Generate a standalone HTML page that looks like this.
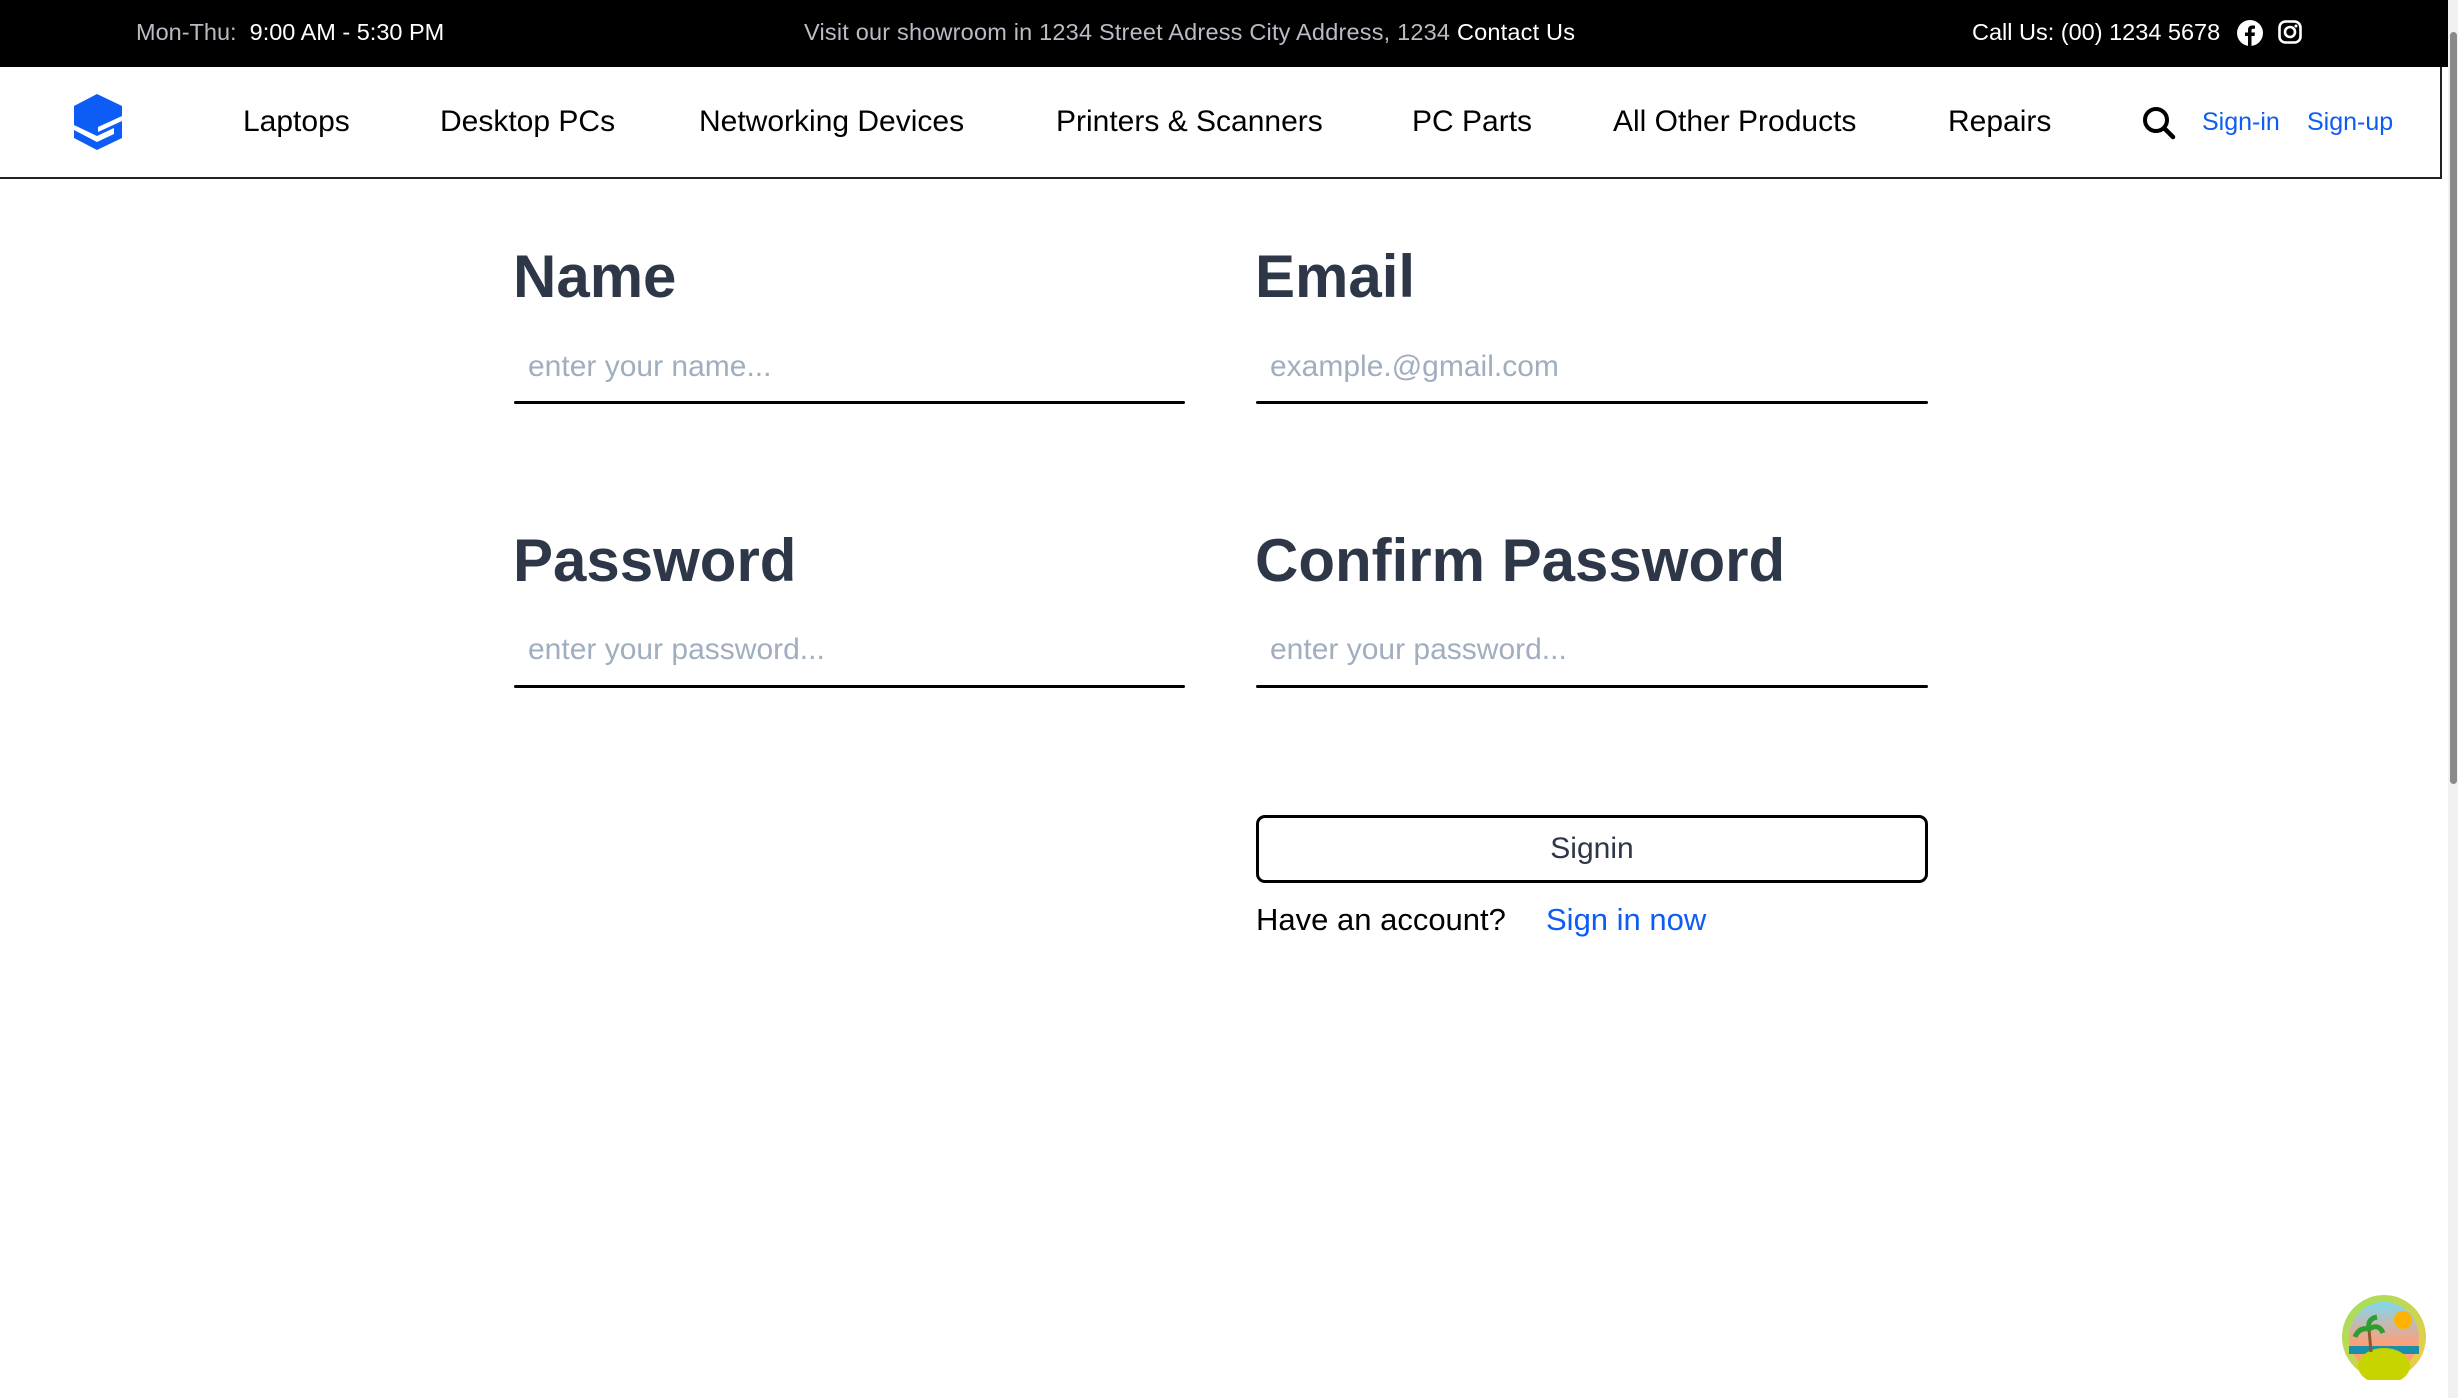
<!DOCTYPE html>
<html><head><meta charset="utf-8"><style>
*{margin:0;padding:0;box-sizing:border-box}
body{width:2458px;height:1398px;background:#fff;font-family:"Liberation Sans",sans-serif;position:relative;overflow:hidden}
.a{position:absolute;white-space:nowrap}
.top{position:absolute;left:0;top:0;width:2458px;height:67px;background:#000}
.tt{font-size:23.5px;line-height:24px;top:20px}
.nav{font-size:30px;color:#000;top:105px;line-height:34px}
.lbl{font-size:60px;font-weight:bold;color:#2d3748;line-height:62px}
.ph{font-size:30px;color:#a0aec0;line-height:32px}
.ul{position:absolute;height:3px;background:#000;border-radius:2px}
</style></head><body>
<div class="top"></div>
<div class="a tt" style="left:136px;color:#b8bcc4">Mon-Thu:&nbsp; <span style="color:#fff">9:00 AM - 5:30 PM</span></div>
<div class="a tt" style="left:804px;color:#b8bcc4;letter-spacing:0.2px">Visit our showroom in 1234 Street Adress City Address, 1234 <span style="color:#fff">Contact Us</span></div>
<div class="a tt" style="left:1972px;color:#fff">Call Us: (00) 1234 5678</div>
<svg class="a" style="left:2237px;top:20px" width="26" height="26" viewBox="0 0 26 26"><circle cx="13" cy="13" r="13" fill="#fff"/><path d="M14.5 26V16h3l.5-3.5h-3.5v-2c0-1 .4-1.7 1.8-1.7H18V5.7c-.5-.1-1.5-.2-2.7-.2-2.6 0-4.3 1.6-4.3 4.4v2.6H8V16h3v10z" fill="#000"/></svg>
<svg class="a" style="left:2278px;top:20px" width="24" height="24" viewBox="0 0 24 24"><rect x="1.5" y="1.5" width="21" height="21" rx="6" fill="none" stroke="#fff" stroke-width="2.6"/><circle cx="12" cy="12" r="5" fill="none" stroke="#fff" stroke-width="2.6"/><circle cx="18" cy="6" r="1.5" fill="#fff"/></svg>
<div style="position:absolute;left:0;top:67px;width:2442px;height:112px;border-right:2px solid #222;border-bottom:2px solid #222"></div>
<svg class="a" style="left:74px;top:94px" width="48" height="56" viewBox="0 0 48 56"><polygon points="0,12 23,0 48,12 48,22 24,33 24,38 48,27 48,44 23,56 0,44 0,36 23,48 40,40 40,34 23,42 0,31" fill="#0d5cf5"/></svg>
<div class="a nav" style="left:243px">Laptops</div>
<div class="a nav" style="left:440px">Desktop PCs</div>
<div class="a nav" style="left:699px">Networking Devices</div>
<div class="a nav" style="left:1056px">Printers &amp; Scanners</div>
<div class="a nav" style="left:1412px">PC Parts</div>
<div class="a nav" style="left:1613px">All Other Products</div>
<div class="a nav" style="left:1948px">Repairs</div>
<svg class="a" style="left:2142px;top:106px" width="34" height="34" viewBox="0 0 34 34"><circle cx="14" cy="14" r="11" fill="none" stroke="#000" stroke-width="4"/><path d="M22 22l9 9" stroke="#000" stroke-width="4.5" stroke-linecap="round"/></svg>
<div class="a" style="left:2202px;top:108px;font-size:25px;color:#0d5cf5">Sign-in</div>
<div class="a" style="left:2307px;top:108px;font-size:25px;color:#0d5cf5">Sign-up</div>

<div class="a lbl" style="left:513px;top:246px">Name</div>
<div class="a ph" style="left:528px;top:351px">enter your name...</div>
<div class="ul" style="left:514px;top:401px;width:671px"></div>
<div class="a lbl" style="left:1255px;top:246px">Email</div>
<div class="a ph" style="left:1270px;top:351px">example.@gmail.com</div>
<div class="ul" style="left:1256px;top:401px;width:672px"></div>

<div class="a lbl" style="left:513px;top:530px">Password</div>
<div class="a ph" style="left:528px;top:634px">enter your password...</div>
<div class="ul" style="left:514px;top:685px;width:671px"></div>
<div class="a lbl" style="left:1255px;top:530px">Confirm Password</div>
<div class="a ph" style="left:1270px;top:634px">enter your password...</div>
<div class="ul" style="left:1256px;top:685px;width:672px"></div>

<div style="position:absolute;left:1256px;top:815px;width:672px;height:68px;border:3px solid #000;border-radius:9px;font-size:30px;color:#2d3748;text-align:center;line-height:62px">Signin</div>
<div class="a" style="left:1256px;top:902px;font-size:31px;color:#000">Have an account?</div>
<div class="a" style="left:1546px;top:902px;font-size:31px;color:#0d5cf5">Sign in now</div>

<div style="position:absolute;left:2448px;top:0;width:10px;height:1398px;background:#f1f1f1"></div>
<div style="position:absolute;left:2450px;top:32px;width:7px;height:752px;background:#8a8a8a;border-radius:4px"></div>

<svg class="a" style="left:2341px;top:1294px" width="86" height="86" viewBox="0 0 86 86">
<defs><linearGradient id="r" x1="0" y1="0" x2="1" y2="1"><stop offset="0" stop-color="#9be15d"/><stop offset="1" stop-color="#f7c948"/></linearGradient>
<linearGradient id="s" x1="0" y1="0" x2="0" y2="1"><stop offset="0" stop-color="#7fd8f0"/><stop offset=".6" stop-color="#ff9f7a"/></linearGradient></defs>
<circle cx="43" cy="43" r="42" fill="url(#r)"/>
<circle cx="43" cy="43" r="35" fill="url(#s)"/>
<circle cx="62" cy="26" r="9" fill="#ffb300"/>
<rect x="8" y="52" width="70" height="8" fill="#1a8fa8"/>
<ellipse cx="43" cy="72" rx="26" ry="18" fill="#c8d400"/>
<path d="M30 58 L28 35" stroke="#8b5a2b" stroke-width="3"/>
<path d="M28 35 q-10 -2 -14 8 M28 35 q10 -6 14 4 M28 35 q-2 -10 8 -12" stroke="#2e9e2e" stroke-width="5" fill="none"/>
</svg>
</body></html>
